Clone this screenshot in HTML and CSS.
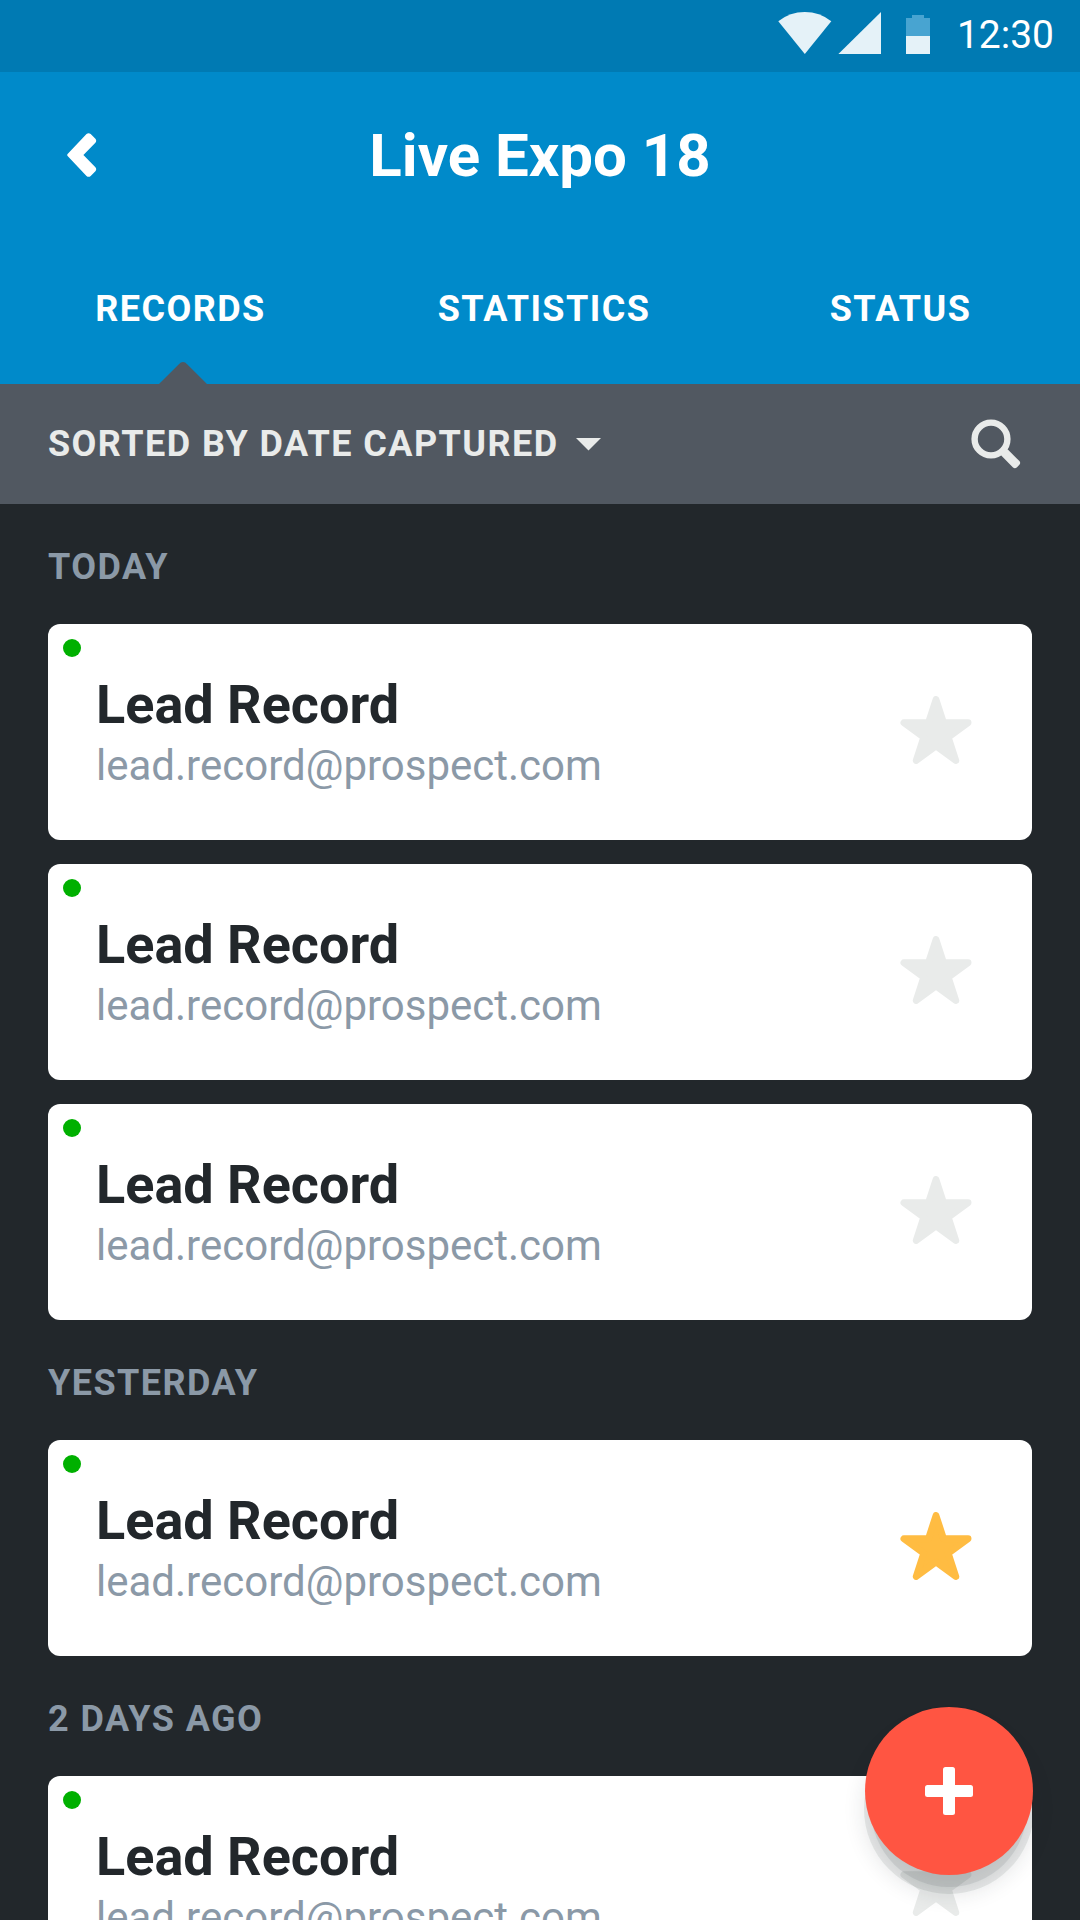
FILE: index.html
```html
<!DOCTYPE html>
<html lang="en">
<head>
  <meta charset="utf-8">
  <title>Live Expo 18</title>
  <link rel="stylesheet" href="styles.css">
</head>
<body>
  <svg width="0" height="0" class="symbols" aria-hidden="true">
    <symbol id="star" viewBox="0 0 72 72">
      <path d="M36 3.45L43.58 26.76H68.1L48.27 41.19L55.84 64.5L36 50.1L16.16 64.5L23.73 41.19L3.9 26.76H28.42Z" fill="currentColor" stroke="currentColor" stroke-width="6.8" stroke-linejoin="round"/>
    </symbol>
  </svg>
  <div class="screen">
    <div class="status-bar">
      <svg class="wifi" width="54" height="42" viewBox="0 0 54 42"><path d="M26.8 42L.3 9.2Q12 0 26.8 0T53.3 9.2Z" fill="#e5f2f8"/></svg>
      <svg class="signal" width="43" height="42" viewBox="0 0 43 42"><path d="M.4 42H43V0Z" fill="#e5f2f8"/></svg>
      <svg class="battery" width="24" height="39" viewBox="0 0 24 39"><path d="M0 3H6V0H18V3H24V21H0Z" fill="#48a4d1"/><path d="M0 21H24V39H0Z" fill="#e5f2f8"/></svg>
      <span class="clock">12:30</span>
    </div>

    <header class="header">
      <div class="title-row">
        <svg class="back" width="30" height="44" viewBox="0 0 30 44"><path d="M.6 21L19.5 1.1Q21.6-.7 23.7 1.1L28.4 5.8Q30 7.7 28.4 9.7L16.4 22L28.4 34.3Q30 36.3 28.4 38.2L23.7 42.9Q21.6 44.7 19.5 42.9L.6 23Q-.2 22 .6 21Z" fill="#fff"/></svg>
        <h1 class="title">Live Expo 18</h1>
      </div>
      <nav class="tabs">
        <a class="tab tab-active">RECORDS<svg class="notch" width="48" height="22" viewBox="0 0 48 22"><path d="M0 22L19.6 2.4Q24-2.4 28.4 2.4L48 22Z" fill="#515861"/></svg></a>
        <a class="tab tab-middle">STATISTICS</a>
        <a class="tab">STATUS</a>
      </nav>
    </header>

    <div class="toolbar">
      <span class="sort">SORTED BY DATE CAPTURED</span>
      <svg class="caret" width="25" height="13" viewBox="0 0 25 13"><path d="M0 0H25L12.5 12.5Z" fill="#e9ebea"/></svg>
      <svg class="search" width="50" height="50" viewBox="0 0 50 50"><circle cx="20" cy="20" r="16.4" fill="none" stroke="#e9ebea" stroke-width="6.4"/><rect x="37" y="15.5" width="21.3" height="9" rx="3" transform="rotate(45 20 20)" fill="#e9ebea"/></svg>
    </div>

    <main class="list">
      <h2 class="day">TODAY</h2>
      <div class="cards">
        <article class="card">
          <i class="dot"></i>
          <div class="lead"><h3 class="name">Lead Record</h3><p class="email">lead.record@prospect.com</p></div>
          <svg class="star"><use href="#star"/></svg>
        </article>
        <article class="card">
          <i class="dot"></i>
          <div class="lead"><h3 class="name">Lead Record</h3><p class="email">lead.record@prospect.com</p></div>
          <svg class="star"><use href="#star"/></svg>
        </article>
        <article class="card">
          <i class="dot"></i>
          <div class="lead"><h3 class="name">Lead Record</h3><p class="email">lead.record@prospect.com</p></div>
          <svg class="star"><use href="#star"/></svg>
        </article>
      </div>
      <h2 class="day">YESTERDAY</h2>
      <div class="cards">
        <article class="card">
          <i class="dot"></i>
          <div class="lead"><h3 class="name">Lead Record</h3><p class="email">lead.record@prospect.com</p></div>
          <svg class="star star-on"><use href="#star"/></svg>
        </article>
      </div>
      <h2 class="day">2 DAYS AGO</h2>
      <div class="cards">
        <article class="card">
          <i class="dot"></i>
          <div class="lead"><h3 class="name">Lead Record</h3><p class="email">lead.record@prospect.com</p></div>
          <svg class="star"><use href="#star"/></svg>
        </article>
      </div>
    </main>

    <button class="fab" aria-label="Add">
      <svg width="48" height="48" viewBox="0 0 48 48"><rect x="18" width="12" height="48" rx="2.5" fill="#fff"/><rect y="18" width="48" height="12" rx="2.5" fill="#fff"/></svg>
    </button>
  </div>
</body>
</html>
```
FILE: styles.css
```css
* { box-sizing: border-box; margin: 0; padding: 0; }

body {
  font-family: Roboto, "Liberation Sans", sans-serif;
  background: #22272b;
}

svg { display: block; flex: none; }

.symbols { position: absolute; }

.screen {
  position: relative;
  width: 1080px;
  height: 1920px;
  overflow: hidden;
  background: #22272b;
}

/* Status bar */
.status-bar {
  display: flex;
  justify-content: flex-end;
  align-items: flex-start;
  height: 72px;
  padding-right: 26px;
  background: #007ab3;
}

.wifi { margin: 12px 6px 0 0; }
.signal { margin: 12px 25px 0 0; }
.battery { margin: 15px 27px 0 0; }

.clock {
  font-size: 39px;
  line-height: 70px;
  color: #fff;
}

/* Header */
.header {
  height: 312px;
  background: #008aca;
  color: #fff;
}

.title-row {
  display: grid;
  grid-template-columns: 97px 1fr 97px;
  align-items: center;
  height: 168px;
}

.back { justify-self: end; margin-bottom: 2px; }

.title {
  font-size: 60px;
  line-height: 72px;
  font-weight: 700;
  text-align: center;
}

.tabs {
  display: grid;
  grid-template-columns: repeat(3, 1fr);
  height: 144px;
}

.tab {
  position: relative;
  padding-left: 1px;
  font-size: 36px;
  line-height: 138px;
  font-weight: 700;
  letter-spacing: 0.04em;
  text-align: center;
}

.tab-middle { padding-left: 8px; }

.notch {
  position: absolute;
  left: 159px;
  bottom: 0;
}

/* Sort and search */
.toolbar {
  display: flex;
  align-items: center;
  height: 120px;
  padding: 0 59px 0 48px;
  background: #515861;
}

.sort {
  font-size: 36px;
  font-weight: 700;
  letter-spacing: 0.04em;
  color: #e9ebea;
}

.caret { margin-left: 17px; }
.search { margin-left: auto; }

/* Records */
.list { padding: 0 48px; }

.day {
  height: 120px;
  font-size: 36px;
  line-height: 126px;
  font-weight: 700;
  letter-spacing: 0.04em;
  color: #8b99a7;
}

.cards {
  display: flex;
  flex-direction: column;
  gap: 24px;
}

.card {
  position: relative;
  display: flex;
  justify-content: space-between;
  align-items: center;
  height: 216px;
  padding: 0 60px 0 48px;
  border-radius: 12px;
  background: #fff;
}

.dot {
  position: absolute;
  left: 15px;
  top: 15px;
  width: 18px;
  height: 18px;
  border-radius: 50%;
  background: #00b000;
}

.lead { padding-top: 4px; }

.name {
  font-size: 54px;
  line-height: 63px;
  font-weight: 700;
  color: #22272b;
}

.email {
  font-size: 42px;
  line-height: 59px;
  color: #8b99a7;
}

.star {
  width: 72px;
  height: 72px;
  color: #e9ebea;
}

.star-on { color: #ffbc42; }

/* Floating add button */
.fab {
  position: absolute;
  right: 47px;
  bottom: 45px;
  display: flex;
  align-items: center;
  justify-content: center;
  width: 168px;
  height: 168px;
  border: 0;
  border-radius: 50%;
  background: #ff5542;
  box-shadow:
    0 18px 0 -6px rgba(34, 39, 43, 0.09),
    0 18px 0 1px rgba(34, 39, 43, 0.09),
    0 18px 22px rgba(34, 39, 43, 0.13);
}
```
